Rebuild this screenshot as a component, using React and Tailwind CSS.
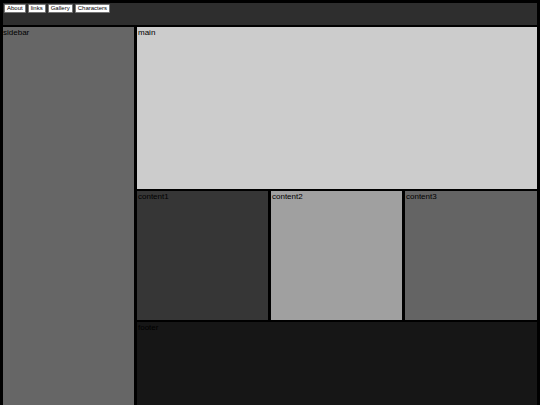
export default function App() {
  const btn = 'bg-white border border-[#767676] rounded-[1px] px-[2px] h-[9px] leading-[7px] text-[6px] text-black'
  return (
    <div className="w-[540px] h-[405px] overflow-hidden bg-black p-[3px]" style={{ fontFamily: '"Liberation Sans", Arial, sans-serif' }}>
      <div className="grid grid-cols-[131px_131px_131px_132px] grid-rows-[22px_162px_129px_100px] gap-x-[3px] gap-y-[2px] text-[8px] leading-[11px] text-black">
        {/* header */}
        <div className="col-span-4 bg-[#2e2e2e] flex items-start gap-[2px] pl-[1px] pt-[1px]">
          <button className={btn}>About</button>
          <button className={btn}>links</button>
          <button className={btn}>Gallery</button>
          <button className={btn}>Characters</button>
        </div>

        <div className="row-span-3 bg-[#666666]">sidebar</div>
        <div className="col-span-3 bg-[#cccccc] pl-[1px]">main</div>

        <div className="bg-[#363636] pl-[1px]">content1</div>
        <div className="bg-[#a0a0a0] pl-[1px]">content2</div>
        <div className="bg-[#646464] pl-[1px]">content3</div>

        <div className="col-span-3 bg-[#161616] pl-[1px]">footer</div>
      </div>
    </div>
  )
}
